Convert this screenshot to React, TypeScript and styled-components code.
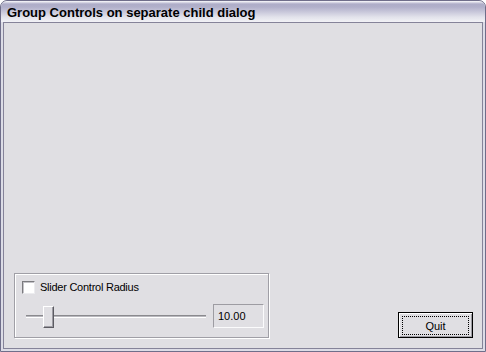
import styled, { createGlobalStyle } from "styled-components"

const GlobalStyle = createGlobalStyle`
	html, body {
		margin: 0;
		padding: 0;
		background: #ffffff;
	}
	body {
		font-family: "Liberation Sans", Arial, sans-serif;
		font-size: 11px;
		color: #000000;
	}
`

const RADIUS_VALUE = 10
const RADIUS_MAX = 100
const TRACK_WIDTH = 180
const THUMB_WIDTH = 11

const App = () => {
	const thumbLeft = Math.round(((TRACK_WIDTH - THUMB_WIDTH) * RADIUS_VALUE) / RADIUS_MAX)

	return (
		<>
			<GlobalStyle />
			<Window>
				<TitleBar>
					<Title>Group Controls on separate child dialog</Title>
				</TitleBar>
				<Client>
					<BottomRow>
						<GroupBox>
							<CheckRow>
								<CheckBox />
								<Label>Slider Control Radius</Label>
							</CheckRow>
							<SliderRow>
								<Slider>
									<Track />
									<Thumb style={{ left: thumbLeft }} />
								</Slider>
								<ValueBox>{RADIUS_VALUE.toFixed(2)}</ValueBox>
							</SliderRow>
						</GroupBox>
						<Button>
							<Focus>Quit</Focus>
						</Button>
					</BottomRow>
				</Client>
			</Window>
		</>
	)
}

export default App

const Window = styled.div`
	width: 486px;
	height: 352px;
	box-sizing: border-box;
	border: 1px solid #6f6e8a;
	border-radius: 7px 7px 0 0;
	background: #dcdce6;
	display: flex;
	flex-direction: column;
	overflow: hidden;
`

const TitleBar = styled.div`
	height: 21px;
	flex: none;
	display: flex;
	align-items: center;
	padding-left: 6px;
	border-radius: 6px 6px 0 0;
	background: linear-gradient(
		to bottom,
		#fbfbfd 0px,
		#e2e2ec 1px,
		#aeadc8 3px,
		#b1b0ca 6px,
		#c9c8db 11px,
		#e2e2eb 16px,
		#f2f2f6 21px
	);
`

const Title = styled.span`
	font-family: "Liberation Sans", Arial, sans-serif;
	font-weight: bold;
	font-size: 13px;
	line-height: 21px;
	padding-top: 1px;
	color: #000000;
	white-space: nowrap;
`

const Client = styled.div`
	flex: 1;
	margin: 0 2px 2px 2px;
	border: 1px solid #858399;
	background: #e0dfe3;
	display: flex;
	flex-direction: column;
	justify-content: flex-end;
	padding: 0 9px 10px 10px;
`

const BottomRow = styled.div`
	display: flex;
	align-items: flex-end;
	justify-content: space-between;
`

const GroupBox = styled.div`
	width: 255px;
	box-sizing: border-box;
	border: 1px solid #a09fa6;
	box-shadow: inset 1px 1px 0 #ffffff, 1px 1px 0 #ffffff;
	padding: 7px 4px 9px 7px;
	display: flex;
	flex-direction: column;
	gap: 10px;
`

const CheckRow = styled.div`
	display: flex;
	align-items: center;
	height: 13px;
	gap: 5px;
`

const CheckBox = styled.div`
	width: 13px;
	height: 13px;
	box-sizing: border-box;
	background: #ffffff;
	border: 1px solid;
	border-color: #7b7b7f #ececef #ececef #7b7b7f;
	box-shadow: inset 1px 1px 0 #c4c3c8;
`

const Label = styled.span`
	font-size: 11px;
	letter-spacing: -0.25px;
	line-height: 13px;
	white-space: nowrap;
`

const SliderRow = styled.div`
	display: flex;
	align-items: center;
	gap: 7px;
	height: 24px;
`

const Slider = styled.div`
	position: relative;
	width: ${TRACK_WIDTH}px;
	height: 24px;
	margin-left: 4px;
`

const Track = styled.div`
	position: absolute;
	left: 0;
	right: 0;
	top: 11px;
	height: 1px;
	border-top: 1px solid #8a8a8e;
	border-bottom: 1px solid #ffffff;
	background: #b9b8be;
`

const Thumb = styled.div`
	position: absolute;
	top: 2px;
	width: ${THUMB_WIDTH}px;
	height: 22px;
	box-sizing: border-box;
	background: #e0dfe3;
	border: 1px solid;
	border-color: #ffffff #5c5b62 #5c5b62 #ffffff;
	box-shadow: inset -1px -1px 0 #9d9ca3;
`

const ValueBox = styled.div`
	width: 51px;
	height: 24px;
	box-sizing: border-box;
	border: 1px solid;
	border-color: #9d9ca2 #fbfbfc #fbfbfc #9d9ca2;
	padding-left: 4px;
	display: flex;
	align-items: center;
	font-size: 11px;
`

const Button = styled.div`
	width: 75px;
	height: 26px;
	box-sizing: border-box;
	border: 1px solid #000000;
	background: #e0dfe3;
	box-shadow: inset 1px 1px 0 #ffffff, inset -1px -1px 0 #9d9ca3;
	padding: 3px 3px 2px 3px;
	display: flex;
`

const Focus = styled.div`
	flex: 1;
	border: 1px dotted #000000;
	display: flex;
	align-items: center;
	justify-content: center;
	font-size: 11px;
	padding-top: 1px;
`
